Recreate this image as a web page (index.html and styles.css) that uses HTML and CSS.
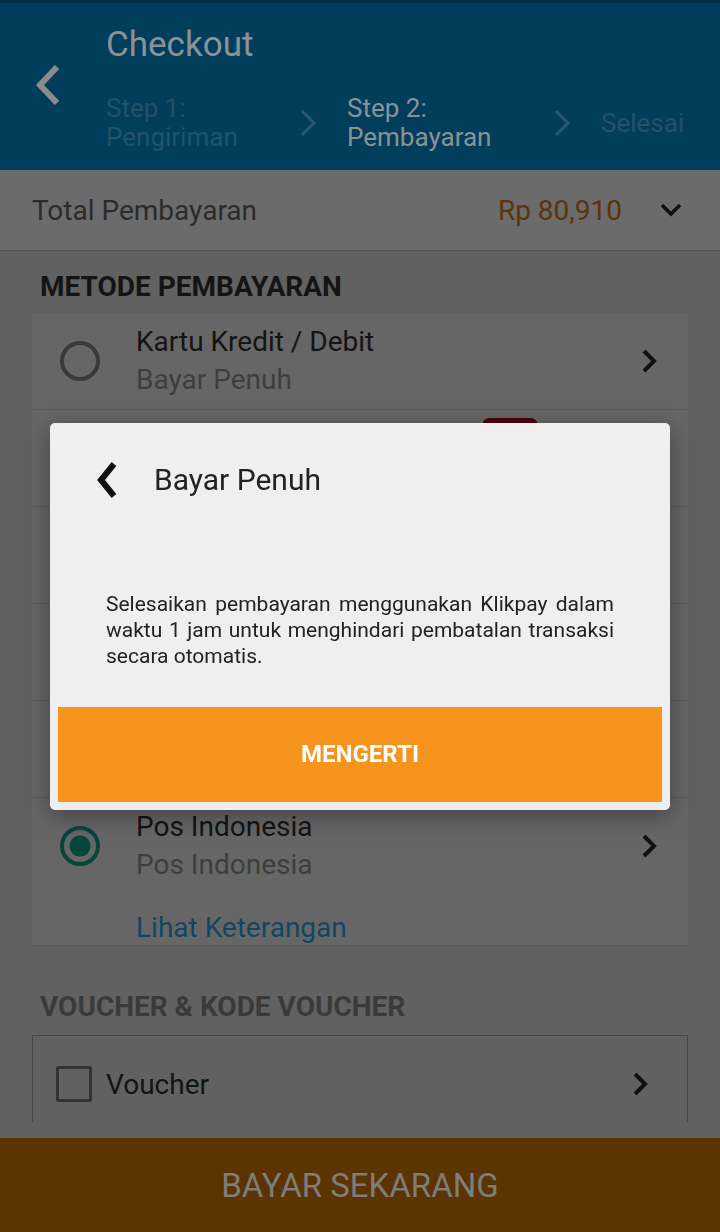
FILE: index.html
```html
<!DOCTYPE html>
<html lang="id">
<head>
    <meta charset="UTF-8">
    <title>Checkout - Pembayaran</title>
    <link rel="stylesheet" href="styles.css">
</head>
<body>
    <div class="screen">
        <header class="topbar">
            <div class="topbar-back">
                <svg width="28" height="44" viewBox="0 0 28 44"><path d="M23 4 L6 22 L23 40" fill="none" stroke="currentColor" stroke-width="6"/></svg>
            </div>
            <div class="topbar-main">
                <div class="topbar-title">Checkout</div>
                <div class="steps">
                    <div class="step step-done">Step 1:<br>Pengiriman</div>
                    <svg class="step-arrow" width="18" height="28" viewBox="0 0 18 28"><path d="M3 2 L15 14 L3 26" fill="none" stroke="currentColor" stroke-width="3"/></svg>
                    <div class="step step-active">Step 2:<br>Pembayaran</div>
                    <svg class="step-arrow" width="18" height="28" viewBox="0 0 18 28"><path d="M3 2 L15 14 L3 26" fill="none" stroke="currentColor" stroke-width="3"/></svg>
                    <div class="step step-next">Selesai</div>
                </div>
            </div>
        </header>

        <div class="total-row">
            <span class="total-label">Total Pembayaran</span>
            <span class="total-amount">Rp 80,910</span>
            <svg class="total-toggle" width="22" height="14" viewBox="0 0 22 14"><path d="M2 2 L11 11 L20 2" fill="none" stroke="currentColor" stroke-width="3.5"/></svg>
        </div>

        <main class="content">
            <h2 class="section-title">METODE PEMBAYARAN</h2>
            <div class="method-list">
                <div class="method">
                    <div class="method-row">
                        <span class="radio"></span>
                        <div class="method-text">
                            <div class="method-name">Kartu Kredit / Debit</div>
                            <div class="method-sub">Bayar Penuh</div>
                        </div>
                        <svg class="arrow" width="18" height="26" viewBox="0 0 18 26"><path d="M4 3 L14 13 L4 23" fill="none" stroke="currentColor" stroke-width="4"/></svg>
                    </div>
                </div>
                <div class="method">
                    <span class="badge"></span>
                    <div class="method-row">
                        <span class="radio"></span>
                        <div class="method-text"></div>
                        <svg class="arrow" width="18" height="26" viewBox="0 0 18 26"><path d="M4 3 L14 13 L4 23" fill="none" stroke="currentColor" stroke-width="4"/></svg>
                    </div>
                </div>
                <div class="method">
                    <div class="method-row">
                        <span class="radio"></span>
                        <div class="method-text"></div>
                    </div>
                </div>
                <div class="method">
                    <div class="method-row">
                        <span class="radio"></span>
                        <div class="method-text"></div>
                    </div>
                </div>
                <div class="method">
                    <div class="method-row">
                        <span class="radio"></span>
                        <div class="method-text"></div>
                    </div>
                </div>
                <div class="method">
                    <div class="method-row">
                        <span class="radio checked"></span>
                        <div class="method-text">
                            <div class="method-name">Pos Indonesia</div>
                            <div class="method-sub">Pos Indonesia</div>
                        </div>
                        <svg class="arrow" width="18" height="26" viewBox="0 0 18 26"><path d="M4 3 L14 13 L4 23" fill="none" stroke="currentColor" stroke-width="4"/></svg>
                    </div>
                    <a class="method-link" href="#">Lihat Keterangan</a>
                </div>
            </div>

            <h2 class="section-title voucher-title">VOUCHER &amp; KODE VOUCHER</h2>
            <div class="voucher-box">
                <span class="checkbox"></span>
                <span class="voucher-label">Voucher</span>
                <svg class="arrow" width="18" height="26" viewBox="0 0 18 26"><path d="M4 3 L14 13 L4 23" fill="none" stroke="currentColor" stroke-width="4"/></svg>
            </div>
        </main>

        <button class="pay-bar">BAYAR SEKARANG</button>

        <!-- modal -->
        <div class="scrim">
            <div class="dialog">
                <div class="dialog-head">
                    <svg width="26" height="38" viewBox="0 0 26 38"><path d="M20 3 L7 19 L20 35" fill="none" stroke="currentColor" stroke-width="6"/></svg>
                    <span class="dialog-title">Bayar Penuh</span>
                </div>
                <p class="dialog-body">Selesaikan pembayaran menggunakan Klikpay dalam waktu 1 jam untuk menghindari pembatalan transaksi secara otomatis.</p>
                <button class="dialog-btn">MENGERTI</button>
            </div>
        </div>
    </div>
</body>
</html>
```

FILE: styles.css
```css
* {
    box-sizing: border-box;
}
body {
    margin: 0;
    font-family: Roboto, "Liberation Sans", sans-serif;
    background-color: #616161;
}
.screen {
    width: 720px;
    height: 1232px;
    display: flex;
    flex-direction: column;
    overflow: hidden;
}
.topbar {
    height: 170px;
    flex-shrink: 0;
    background-color: #013e5b;
    border-top: 3px solid #002f47;
    display: flex;
}
.topbar-back {
    width: 106px;
    padding: 60px 0 0 34px;
    color: #8c8c8c;
}
.topbar-main {
    flex: 1;
}
.topbar-title {
    font-size: 35px;
    line-height: 40px;
    color: #8a9297;
    margin-top: 22px;
}
.steps {
    display: flex;
    align-items: center;
    margin-top: 29px;
}
.step {
    font-size: 26px;
    line-height: 29px;
}
.step-done {
    color: #22516a;
    width: 193px;
}
.step-active {
    color: #8a9297;
    width: 206px;
}
.step-next {
    color: #22516a;
}
.step-arrow {
    color: #285870;
    margin-right: 30px;
}
.total-row {
    height: 81px;
    flex-shrink: 0;
    background-color: #6b6b6b;
    border-bottom: 1px solid #565656;
    display: flex;
    align-items: center;
    padding: 0 38px 0 32px;
    font-size: 28px;
}
.total-label {
    flex: 1;
    color: #2b2b2b;
}
.total-amount {
    color: #5c340b;
    margin-right: 38px;
}
.total-toggle {
    color: #111;
}
.content {
    flex: 1;
    overflow: hidden;
    padding: 0 32px;
    margin-bottom: 16px;
}
.section-title {
    margin: 0;
    padding: 20px 8px 10px;
    font-size: 28px;
    line-height: 32px;
    font-weight: bold;
    color: #141414;
}
.voucher-title {
    padding-top: 45px;
    padding-bottom: 12px;
    color: #3a3a3a;
}
.method-list {
    background-color: #666666;
}
.method {
    position: relative;
    border-bottom: 1px solid #5a5a5a;
}
.method-row {
    height: 96px;
    display: flex;
    align-items: center;
    padding: 0 30px 0 28px;
}
.radio {
    width: 40px;
    height: 40px;
    border: 4px solid #3a3a3a;
    border-radius: 50%;
    margin-right: 36px;
    flex-shrink: 0;
}
.radio.checked {
    border-color: #08453b;
    background: radial-gradient(circle, #08453b 0 10px, transparent 11px);
}
.method-text {
    flex: 1;
    font-size: 28px;
    line-height: 38px;
}
.method-name {
    color: #141414;
}
.method-sub {
    color: #3e3e3e;
}
.arrow {
    color: #111;
}
.badge {
    position: absolute;
    top: 8px;
    left: 450px;
    width: 56px;
    height: 30px;
    border-radius: 8px;
    background-color: #4a000e;
}
.method-link {
    display: block;
    padding: 17px 0 0 104px;
    height: 51px;
    font-size: 28px;
    line-height: 34px;
    color: #134661;
    text-decoration: none;
}
.voucher-box {
    height: 110px;
    border: 1px solid #474747;
    display: flex;
    align-items: center;
    padding: 0 38px 12px 23px;
}
.checkbox {
    width: 36px;
    height: 36px;
    border: 3px solid #333;
    border-radius: 3px;
    margin-right: 14px;
}
.voucher-label {
    flex: 1;
    font-size: 28px;
    color: #141414;
}
.pay-bar {
    height: 94px;
    flex-shrink: 0;
    border: none;
    background-color: #5c3400;
    color: #7d7d7d;
    font-family: inherit;
    font-size: 33px;
}
.scrim {
    position: fixed;
    inset: 0;
    display: flex;
    align-items: center;
    justify-content: center;
}
.dialog {
    width: 620px;
    background-color: #efefef;
    border-radius: 5px;
    padding: 8px;
    box-shadow: 0 6px 24px rgba(0,0,0,0.35);
}
.dialog-head {
    display: flex;
    align-items: center;
    padding: 30px 0 0 36px;
    color: #111;
}
.dialog-title {
    font-size: 30px;
    color: #222;
    margin-left: 34px;
}
.dialog-body {
    margin: 92px 48px 38px;
    font-size: 21px;
    line-height: 26px;
    text-align: justify;
    color: #222;
}
.dialog-btn {
    display: block;
    width: 100%;
    height: 95px;
    border: none;
    background-color: #f7941d;
    color: white;
    font-family: inherit;
    font-size: 24px;
    font-weight: bold;
}
```
